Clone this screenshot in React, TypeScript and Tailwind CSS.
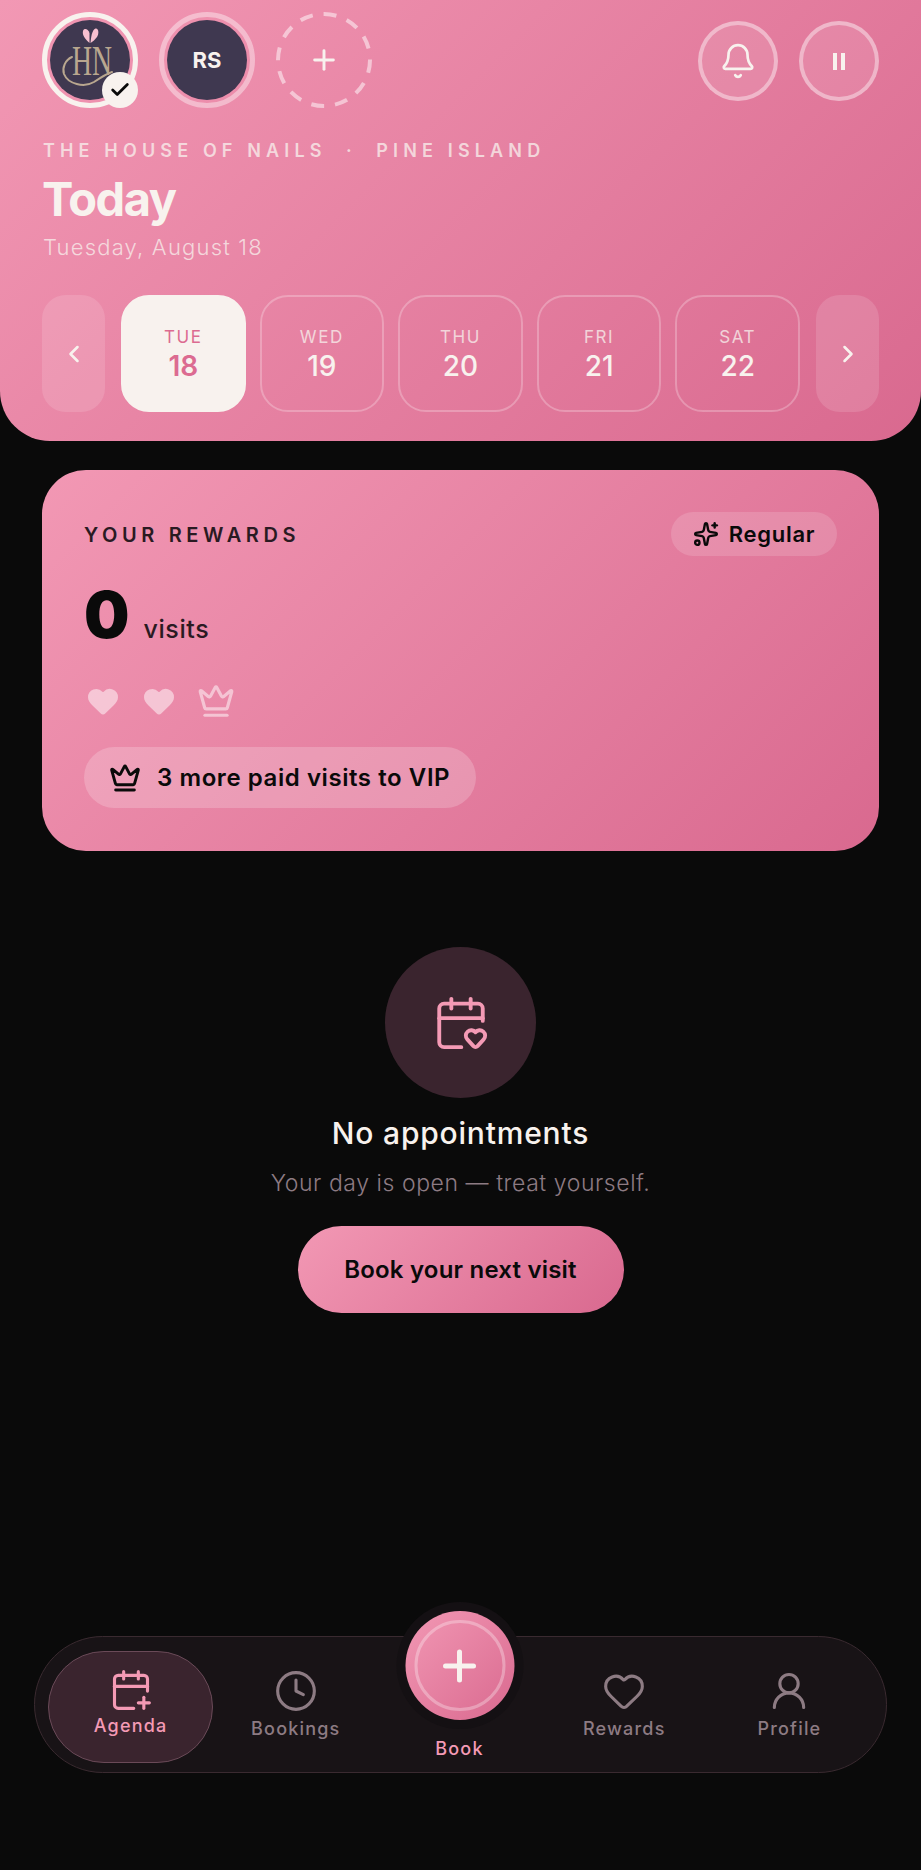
import { Bell, CalendarHeart, CalendarPlus, Check, ChevronLeft, ChevronRight, Clock, Crown, Heart, Plus, Sparkles, UserRound } from "lucide-react";

const days = [
  { label: "TUE", date: 18, active: true },
  { label: "WED", date: 19 },
  { label: "THU", date: 20 },
  { label: "FRI", date: 21 },
  { label: "SAT", date: 22 },
];

function HouseLogo() {
  return (
    <svg viewBox="0 0 80 80" className="h-20 w-20">
      <path d="M39.5 23 C35 19 32 15 33 11 C34 8 38 8.5 39.5 13 Z" fill="#f8c0d0" />
      <path d="M40.5 23 C41 17 42 10 45.5 8.5 C49 8 49 14 47 17 C45 19.5 43 21.5 40.5 23 Z" fill="#f8c0d0" />
      <text x="42" y="55" textAnchor="middle" fontFamily="Liberation Serif" fontSize="42" fill="#b9a78f" textLength="40" lengthAdjust="spacingAndGlyphs">
        HN
      </text>
      <path d="M22 37 C15 40 12 48 14 54 C18 64 34 68 44 62 C50 58 56 54 62 52" fill="none" stroke="#b9a78f" strokeWidth="2" strokeLinecap="round" />
    </svg>
  );
}

function Avatars() {
  return (
    <div className="flex items-center gap-[21px]">
      <div className="relative h-24 w-24 rounded-full border-[5px] border-[#f8f2ee] p-[3px]">
        <div className="h-20 w-20 rounded-full bg-[#3f3850]">
          <HouseLogo />
        </div>
        <div className="absolute -bottom-[5px] -right-[5px] flex h-9 w-9 items-center justify-center rounded-full bg-[#f8f2ee]">
          <Check size={22} strokeWidth={3} className="text-[#0a0a0a]" />
        </div>
      </div>
      <div className="h-24 w-24 rounded-full border-[5px] border-white/40 p-[3px]">
        <div className="flex h-20 w-20 items-center justify-center rounded-full bg-[#3f3850] text-[22px] font-bold text-[#f8f2ee]">RS</div>
      </div>
      <div className="relative flex h-24 w-24 items-center justify-center text-[#f8f2ee]">
        <svg viewBox="0 0 96 96" className="absolute inset-0 h-24 w-24">
          <circle cx="48" cy="48" r="46" fill="none" stroke="white" strokeOpacity="0.5" strokeWidth="4" strokeDasharray="13 11" />
        </svg>
        <Plus size={32} strokeWidth={2.2} />
      </div>
    </div>
  );
}

function RoundButton({ children }: { children: React.ReactNode }) {
  return <button className="flex h-20 w-20 items-center justify-center rounded-full border-[4px] border-white/40 bg-white/10 text-[#f8f2ee]">{children}</button>;
}

function NavItem({ label, icon, active }: { label: string; icon: React.ReactNode; active?: boolean }) {
  return (
    <div className={active ? "mt-[4px] flex h-[112px] flex-1 flex-col items-center justify-center gap-[2px] rounded-full border border-[#6a4a58] bg-[#3a242e] pb-[8px] text-[#f49ab5]" : "flex h-[112px] flex-1 flex-col items-center justify-center gap-[4px] border border-transparent text-[#8d7b83]"}>
      {icon}
      <span className="text-[18px] font-medium leading-[24px] tracking-[1.2px]">{label}</span>
    </div>
  );
}

export default function App() {
  return (
    <div className="flex h-[1870px] flex-col bg-[#0a0a0a] font-['Inter',sans-serif]">
      <header className="h-[441px] rounded-b-[50px] bg-[linear-gradient(135deg,#f298b4,#d9698f)] px-[42px] pt-3">
        <div className="flex items-start justify-between">
          <Avatars />
          <div className="flex gap-[21px] pt-[9px]">
            <RoundButton>
              <Bell size={38} strokeWidth={1.7} />
            </RoundButton>
            <RoundButton>
              <div className="flex gap-[4px]">
                <span className="h-[17px] w-[4px] bg-[#f8f2ee]" />
                <span className="h-[17px] w-[4px] bg-[#f8f2ee]" />
              </div>
            </RoundButton>
          </div>
        </div>
        <p className="mt-[31px] whitespace-pre pl-[1px] text-[18px] font-semibold leading-[24px] tracking-[5.15px] text-[#f8f2ee]/75">THE HOUSE OF NAILS {"\u00a0"}·{"\u00a0"} PINE ISLAND</p>
        <h1 className="mt-[8px] text-[47px] font-bold leading-[56px] tracking-[-1.5px] text-[#f8f2ee]">Today</h1>
        <p className="mt-[5px] pl-[1px] text-[22px] font-light leading-[30px] tracking-[1.2px] text-[#f8f2ee]/75">Tuesday, August 18</p>
        <div className="mt-[33px] flex h-[117px] gap-4">
          <button className="flex w-[63px] items-center justify-center rounded-[24px] bg-white/[0.13] text-[#f8f2ee]">
            <ChevronLeft size={28} strokeWidth={2.2} />
          </button>
          <div className="flex flex-1 gap-[14px]">
            {days.map((d) => (
              <div key={d.label} className={d.active ? "flex flex-1 flex-col items-center justify-center rounded-[28px] border-2 border-[#f8f2ee] bg-[#f8f2ee] text-[#dc6b91]" : "flex flex-1 flex-col items-center justify-center rounded-[28px] border-2 border-white/25 text-[#f8f2ee]"}>
                <span className={d.active ? "text-[17px] leading-[24px] tracking-[1.6px]" : "text-[17px] leading-[24px] tracking-[1.6px] opacity-75"}>{d.label}</span>
                <span className={d.active ? "text-[28px] font-semibold leading-[34px]" : "text-[28px] font-medium leading-[34px]"}>{d.date}</span>
              </div>
            ))}
          </div>
          <button className="flex w-[63px] items-center justify-center rounded-[24px] bg-white/[0.13] text-[#f8f2ee]">
            <ChevronRight size={28} strokeWidth={2.2} />
          </button>
        </div>
      </header>

      <main className="flex flex-1 flex-col items-center">
        <section className="mt-[29px] flex h-[381px] w-[837px] flex-col rounded-[44px] bg-[linear-gradient(135deg,#f298b4,#d9698f)] px-[42px] pt-[42px] text-[#0a0a0a]">
          <div className="flex items-center justify-between">
            <h2 className="pt-[2px] text-[20px] font-semibold tracking-[4.6px] text-[#2a1a22]">YOUR REWARDS</h2>
            <div className="flex h-[44px] w-[166px] items-center justify-center gap-[10px] rounded-full bg-white/15">
              <Sparkles size={26} strokeWidth={2.2} />
              <span className="text-[22px] font-semibold leading-none tracking-[0.7px]">Regular</span>
            </div>
          </div>
          <div className="mt-[21px] flex items-baseline gap-[14px]">
            <span className="text-[64px] font-black leading-[76px]">0</span>
            <span className="text-[25px] font-medium tracking-[0.6px] text-[#2a1a22]">visits</span>
          </div>
          <div className="mt-[29px] flex h-[38px] items-center gap-[20px] pl-[1px] text-white/50">
            <Heart size={36} fill="currentColor" strokeWidth={0} />
            <Heart size={36} fill="currentColor" strokeWidth={0} />
            <Crown size={38} strokeWidth={2} />
          </div>
          <div className="mt-[27px] flex h-[61px] w-[392px] items-center gap-[16px] self-start rounded-full bg-white/20 pl-[25px]">
            <Crown size={32} strokeWidth={2.2} />
            <span className="text-[24px] font-semibold leading-none tracking-[0.57px]">3 more paid visits to VIP</span>
          </div>
        </section>

        <div className="mt-[96px] flex h-[151px] w-[151px] items-center justify-center rounded-full bg-[#3a242e] text-[#f49ab5]">
          <CalendarHeart size={58} strokeWidth={1.6} />
        </div>
        <h3 className="mt-[15px] text-[30px] font-medium leading-[40px] tracking-[0.8px] text-[#f8f2ee]">No appointments</h3>
        <p className="mt-[15px] text-[23px] font-light leading-[30px] tracking-[0.56px] text-[#8d7b83]">Your day is open — treat yourself.</p>
        <button className="mt-[28px] h-[87px] w-[326px] rounded-full bg-[linear-gradient(135deg,#f298b4,#d9698f)] text-[24px] font-semibold tracking-[0.2px] text-[#0a0a0a]">Book your next visit</button>
      </main>

      <nav className="relative mx-[34px] mb-[97px] flex h-[137px] items-center rounded-full border border-[#3a2a30] bg-[#181316] pl-[13px] pr-[14px]">
        <NavItem label="Agenda" active icon={<CalendarPlus size={44} strokeWidth={1.7} />} />
        <NavItem label="Bookings" icon={<Clock size={44} strokeWidth={1.7} />} />
        <div className="flex-1" />
        <NavItem label="Rewards" icon={<Heart size={44} strokeWidth={1.7} />} />
        <NavItem label="Profile" icon={<UserRound size={44} strokeWidth={1.7} />} />
        <div className="absolute -top-[35px] left-[calc(50%-1px)] flex -translate-x-1/2 flex-col items-center">
          <div className="rounded-full bg-[#141013] p-[9px]">
            <div className="flex h-[109px] w-[109px] items-center justify-center rounded-full bg-[linear-gradient(135deg,#f298b4,#d9698f)] p-[9px] text-[#f8f2ee]">
              <div className="flex h-full w-full items-center justify-center rounded-full border-[3px] border-white/30">
                <Plus size={48} strokeWidth={2.5} />
              </div>
            </div>
          </div>
          <span className="mt-[8px] text-[18px] font-medium leading-[24px] tracking-[1.2px] text-[#f49ab5]">Book</span>
        </div>
      </nav>
    </div>
  );
}
